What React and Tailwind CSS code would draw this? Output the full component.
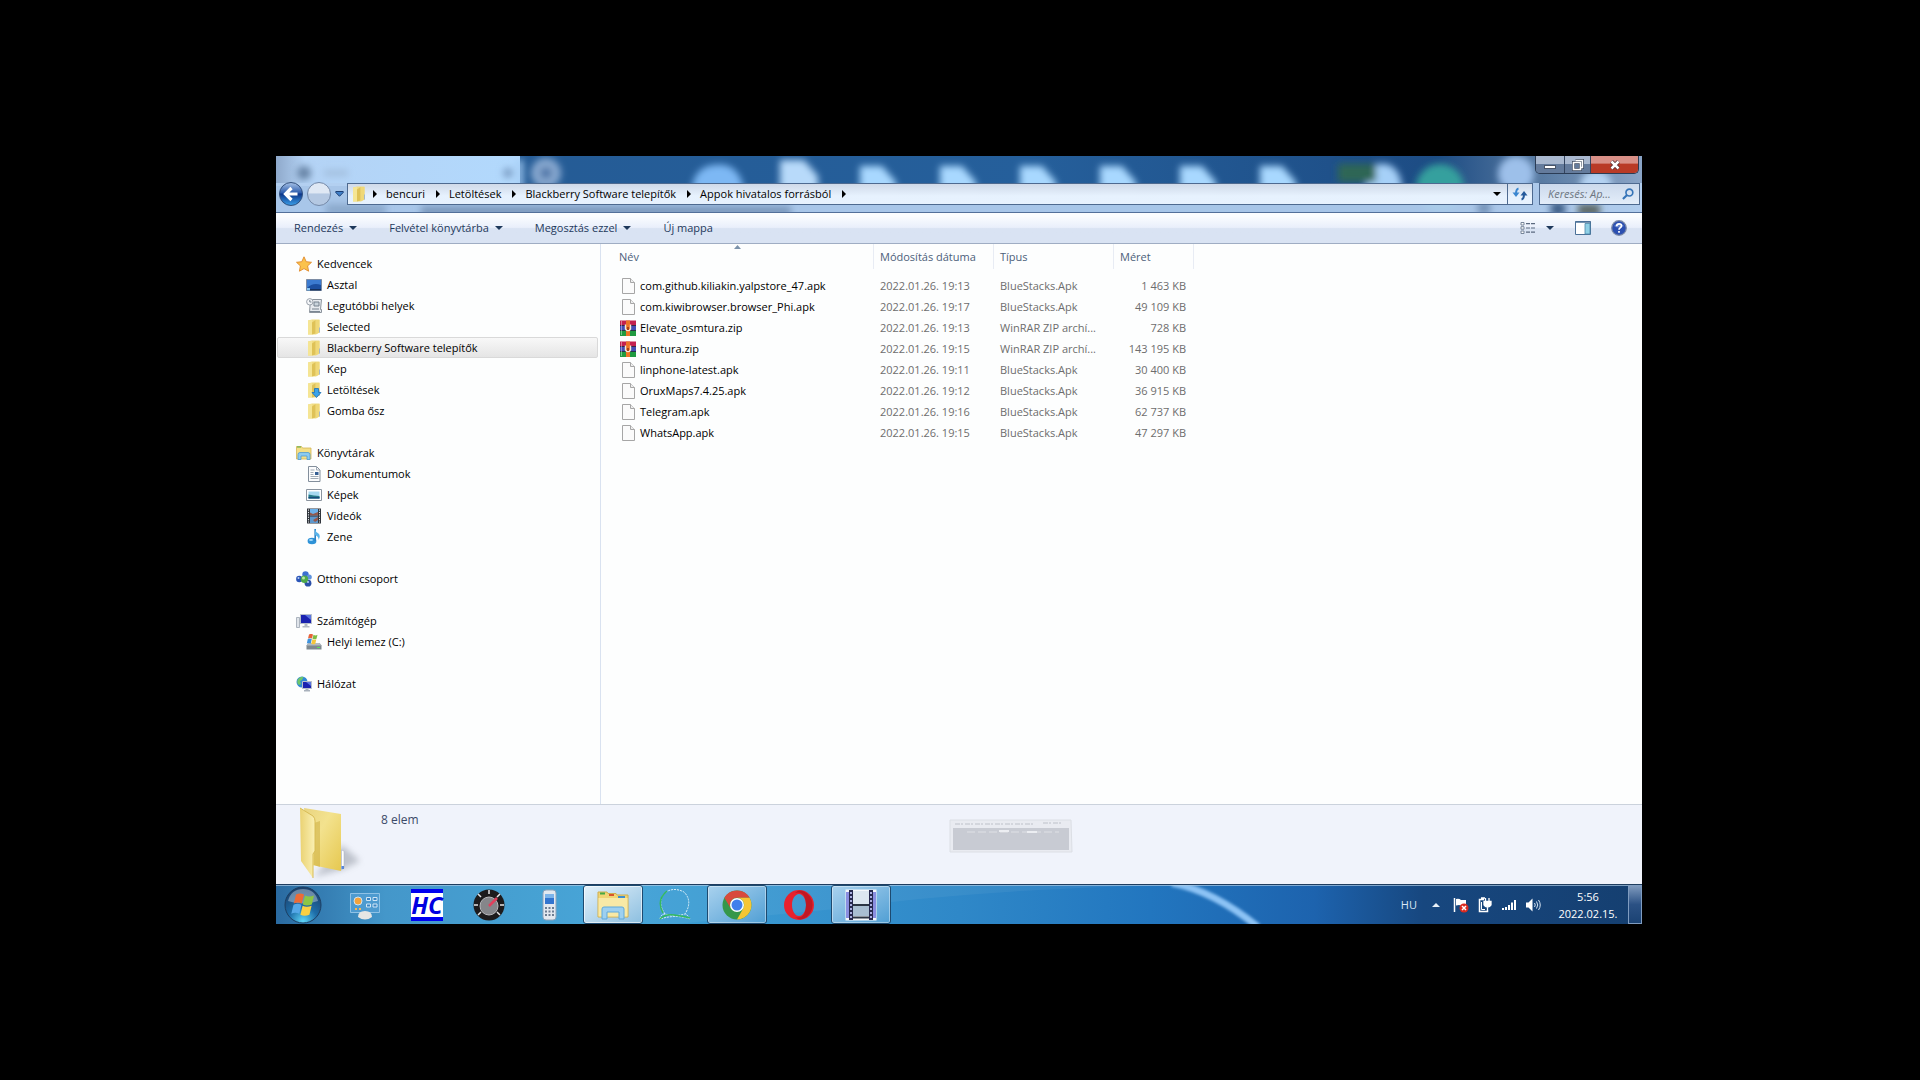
const favorites = [
  { label: 'Asztal', icon: 'desktop' },
  { label: 'Legutóbbi helyek', icon: 'recent' },
  { label: 'Selected', icon: 'folder' },
  { label: 'Blackberry Software telepítők', icon: 'folder', active: true },
  { label: 'Kep', icon: 'folder' },
  { label: 'Letöltések', icon: 'downloads' },
  { label: 'Gomba ősz', icon: 'folder' },
]

const groups = [
  { label: 'Kedvencek', icon: 'star', items: favorites },
  {
    label: 'Könyvtárak',
    icon: 'library',
    items: [
      { label: 'Dokumentumok', icon: 'document' },
      { label: 'Képek', icon: 'picture' },
      { label: 'Videók', icon: 'video' },
      { label: 'Zene', icon: 'music' },
    ],
  },
  { label: 'Otthoni csoport', icon: 'homegroup', items: [] },
  { label: 'Számítógép', icon: 'computer', items: [{ label: 'Helyi lemez (C:)', icon: 'disk' }] },
  { label: 'Hálózat', icon: 'network', items: [] },
]

const files = [
  { name: 'com.github.kiliakin.yalpstore_47.apk', date: '2022.01.26. 19:13', type: 'BlueStacks.Apk', size: '1 463 KB' },
  { name: 'com.kiwibrowser.browser_Phi.apk', date: '2022.01.26. 19:17', type: 'BlueStacks.Apk', size: '49 109 KB' },
  { name: 'Elevate_osmtura.zip', date: '2022.01.26. 19:13', type: 'WinRAR ZIP archí...', size: '728 KB', zip: true },
  { name: 'huntura.zip', date: '2022.01.26. 19:15', type: 'WinRAR ZIP archí...', size: '143 195 KB', zip: true },
  { name: 'linphone-latest.apk', date: '2022.01.26. 19:11', type: 'BlueStacks.Apk', size: '30 400 KB' },
  { name: 'OruxMaps7.4.25.apk', date: '2022.01.26. 19:12', type: 'BlueStacks.Apk', size: '36 915 KB' },
  { name: 'Telegram.apk', date: '2022.01.26. 19:16', type: 'BlueStacks.Apk', size: '62 737 KB' },
  { name: 'WhatsApp.apk', date: '2022.01.26. 19:15', type: 'BlueStacks.Apk', size: '47 297 KB' },
]

const crumbs = ['bencuri', 'Letöltések', 'Blackberry Software telepítők', 'Appok hivatalos forrásból']

const folderShape = (
  <>
    <path d="M2 1.500 6 .5h7.500v13L10 15.500H2z" fill="#f0dc84" />
    <path d="M2 1.500 6 1v14.500H2z" fill="#f5e594" />
    <path d="M6 3.500 9.500 1v13.500L6 15.500z" fill="#dfc257" />
    <path d="M10 1h3.500v12.500L10 15z" fill="#efd878" />
    <path d="M13.500 8.500v5" stroke="#a5b9c9" />
  </>
)

const shapes = {
  folder: folderShape,
  star: (
    <path d="M8 .8 10.200 5.700l5.300.6-3.900 3.600 1 5.300L8 12.600l-4.600 2.600 1-5.300L.5 6.300l5.300-.6z" fill="#fbc24c" stroke="#e08a2b" strokeWidth=".9" />
  ),
  desktop: (
    <>
      <path d="M.5 2.500h15v11H.5z" fill="#1c4fa0" stroke="#7c8ca4" />
      <path d="M1 3h14v5Q7 5 1 11z" fill="#3c7bd0" />
      <path d="M1 12h14v1.500H1z" fill="#15305c" />
      <path d="M1 11h3v2.500H1z" fill="#86c4f2" />
    </>
  ),
  recent: (
    <>
      <path d="M4.500 1.500h11l-1 10h1v3h-12z" fill="#e6eaee" stroke="#8b939c" />
      <path d="M8 4h5v4H8zM6 11h7" fill="#c9d4dc" stroke="#76828e" />
      <circle cx="3.800" cy="3.800" r="3.200" fill="#f5f7fa" stroke="#9aa2ab" />
      <path d="M3.800 2v2h1.700M4 13.500h10" fill="none" stroke="#7b8792" />
    </>
  ),
  downloads: (
    <>
      {folderShape}
      <path d="M8.500 6.500h4v4h2.500l-4.500 5-4.500-5h2.500z" fill="#3aa3ea" stroke="#1a6fb8" strokeWidth=".8" />
    </>
  ),
  library: (
    <>
      <path d="M.5 1.500h5l1 1.500h8.500v11H.5z" fill="#f4df87" stroke="#d3b553" strokeWidth=".8" />
      <path d="M1 2h4" stroke="#54ad4d" />
      <path d="M2 14.500V9.500q0-2 2-2h8q2 0 2 2v5h-3V11H5v3.500z" fill="#8ccbf0" stroke="#4f9bd0" strokeWidth=".8" />
    </>
  ),
  document: (
    <>
      <path d="M2.500.5h8l3.500 3.500v11.500H2.500z" fill="#fbfcfd" stroke="#838f9c" />
      <path d="M10.500.5V4H14M4.500 4h4M4.500 6.500h3M4.500 8.500h3M4.500 10.500h8M4.500 12.500h8" fill="none" stroke="#a0abb6" />
      <path d="M9 6h3.500v3H9z" fill="#345f94" />
    </>
  ),
  picture: (
    <>
      <path d="M.5 2.500h15v11H.5z" fill="#fff" stroke="#8a949f" />
      <path d="M2.500 4.500h11v7h-11z" fill="#a6d9f0" />
      <path d="M2.500 7.500q5 1 11 1.500v2.500h-11z" fill="#277b87" />
      <path d="M2.500 10h11v1.500h-11z" fill="#174c7c" />
    </>
  ),
  video: (
    <>
      <path d="M1 .5h14v15H1z" fill="#30353c" />
      <path d="M4 1h8v6.500H4z" fill="#6cb1ea" />
      <path d="M4 8.500h8V15H4z" fill="#5d97cc" />
      <path d="m4 4.500 3 1.500 5-2v3.500H4zM7 12l5-3v3l-3 2z" fill="#94584c" />
      <path d="M2.500 1.500v13M13.500 1.500v13" stroke="#e8edf0" strokeDasharray="1.200 1.200" />
    </>
  ),
  music: (
    <>
      <ellipse cx="6" cy="12" rx="4.400" ry="3.300" fill="#2e93d8" />
      <path d="M9.200 0v12" stroke="#2b80c4" strokeWidth="1.600" />
      <path d="M9 0q.5 3 3.500 4.500Q15 7 12.500 11q.5-3.500-3.500-5z" fill="#58b3ea" />
      <ellipse cx="5" cy="11" rx="2" ry="1" fill="#a4dafb" />
    </>
  ),
  homegroup: (
    <>
      <circle cx="9.500" cy="3.500" r="3.200" fill="#3c6fd0" />
      <circle cx="3.300" cy="8" r="3.200" fill="#2a55b8" />
      <circle cx="12" cy="12.200" r="3.400" fill="#2a4fa8" />
      <circle cx="13.200" cy="6" r="2.600" fill="#5f93dd" />
      <circle cx="8.500" cy="8.200" r="3.700" fill="#4ea94a" />
      <circle cx="7.500" cy="7" r="1.500" fill="#b9e6a4" />
      <circle cx="2.500" cy="7" r="1" fill="#b8d1f5" />
      <circle cx="12" cy="11" r="1" fill="#b8d1f5" />
    </>
  ),
  computer: (
    <>
      <path d="M.5 4.500h3v10h-3z" fill="#dfe4ea" stroke="#9aa4b0" strokeWidth=".8" />
      <path d="M4.500 1.500h11v9h-11z" fill="#1a22b0" stroke="#b7bfca" />
      <path d="M9 2h6v5z" fill="#5a74e0" />
      <path d="M8.500 11h3v2h2v1.500h-7V13h2z" fill="#b3bac4" />
    </>
  ),
  disk: (
    <>
      <path d="M2.500 9h11l2 2.500v4H.5v-4z" fill="#7f898f" />
      <path d="M2.500 9h11l2 2.500H.5z" fill="#b3bbc1" />
      <path d="M11 13.500h3" stroke="#5ce05a" />
      <path d="M3 .5q2-1.200 4 0L6 4.500q-2-1-4 0z" fill="#e8623a" />
      <path d="M7.500 .8q2 1.200 4 0l-1 4q-2 1-4 0z" fill="#7fbc42" />
      <path d="M1.800 5q2-1 4 0l-1 4.500q-2-1-4 0z" fill="#3f93dd" />
      <path d="M6.300 5.200q2 1 4 0l-1 4.500q-2 1-4 0z" fill="#f6c63c" />
    </>
  ),
  network: (
    <>
      <circle cx="6" cy="6" r="5.500" fill="#3089d6" />
      <path d="M2 3q3-3 5.500-2L6 4 4 5l1 3-2 1Q0 7 2 3z" fill="#6fc66a" />
      <path d="M6.500 5.500h9v7h-9z" fill="#1a22b0" stroke="#b7bfca" />
      <path d="M10 6h5v4z" fill="#5a74e0" />
      <path d="M9.500 13h3v1h1.500v1.500H8V14h1.500z" fill="#a9b1bc" />
    </>
  ),
  file: (
    <>
      <path d="M2.500.5h8l4 4v11h-12z" fill="#fbfbfb" stroke="#a6a6a6" />
      <path d="M10.500.5v4h4" fill="#eee" stroke="#a6a6a6" />
    </>
  ),
  zip: (
    <>
      <path d="M0 .5h16V6H0z" fill="#c4214f" />
      <path d="M0 5.500h16V11H0z" fill="#454cb4" />
      <path d="M0 10.500h16V16H0z" fill="#1f9a40" />
      <path d="M0 5.500h16M0 10.500h16" stroke="#26233a" strokeWidth=".8" />
      <path d="M6 .5h4V16H6z" fill="#ee7426" />
      <path d="M5.500 4.500V9q.5 1.500 2.500 1.500T10.500 9V4.500" fill="none" stroke="#f3ecdc" strokeWidth="1.400" />
      <path d="M7 7h2v3H7z" fill="#a8401c" />
      <path d="M1.500 1v14" stroke="#fff" strokeOpacity=".4" />
    </>
  ),
}

const Icon = ({ name, className = 'size-4' }) => (
  <svg viewBox="0 0 16 16" className={`${className} shrink-0`} aria-hidden="true">
    {shapes[name]}
  </svg>
)

const DownArrow = ({ className = 'text-[#1e395b]' }) => (
  <svg viewBox="0 0 8 4" className={`h-1 w-2 shrink-0 ${className}`} aria-hidden="true">
    <path d="M0 0h8L4 4z" fill="currentColor" />
  </svg>
)

// Desktop and windows seen through the glass frame
const GlassBackdrop = () => (
  <svg viewBox="0 0 1366 56" preserveAspectRatio="none" className="absolute inset-0 h-full w-full" aria-hidden="true">
    <defs>
      <filter id="soft" x="-20%" y="-50%" width="140%" height="200%">
        <feGaussianBlur stdDeviation="3.500" />
      </filter>
      <linearGradient id="sky" x1="0" x2="1" y1="0" y2="0">
        <stop offset="0" stopColor="#255a93" />
        <stop offset=".55" stopColor="#255f9b" />
        <stop offset=".85" stopColor="#1d4c84" />
        <stop offset=".92" stopColor="#54779f" />
        <stop offset="1" stopColor="#8aa4c6" />
      </linearGradient>
      <linearGradient id="tab" x1="0" x2="1" y1="0" y2="0">
        <stop offset="0" stopColor="#8fa9cb" />
        <stop offset=".12" stopColor="#b4d3f5" />
        <stop offset="1" stopColor="#b2d9fd" />
      </linearGradient>
    </defs>
    <path d="M0 0h1366v56H0z" fill="url(#sky)" />
    <path d="M0 0h244v30H0z" fill="url(#tab)" />
    <g filter="url(#soft)">
      <path d="M241 4h6v30h-6z" fill="#a6cdf4" />
      <circle cx="28" cy="17" r="7" fill="#6784a6" />
      <path d="M48 14h24v6H48z" fill="#a2bedd" />
      <circle cx="232" cy="17" r="5" fill="#7b9dc4" />
      <circle cx="270" cy="17" r="15" fill="#88a9d0" />
      <circle cx="270" cy="17" r="6" fill="#4f76a8" />
      <path d="M416 36q0-20 16-26 32-8 36 26z" fill="#7db8f4" />
      <path d="M504 4h24l14 16v16h-38z" fill="#b8dafa" />
      <path d="M584 10h22l14 16v14h-36zM664 10h22l14 16v14h-36zM744 10h22l14 16v14h-36zM824 10h22l14 16v14h-36zM904 10h22l14 16v14h-36zM984 10h22l14 16v14h-36z" fill="#a8d8ff" />
      <path d="M1090 8h20q16 4 16 28h-36z" fill="#a6d0f8" />
      <path d="M1062 8h38v18h-38z" fill="#2d6655" />
      <circle cx="1164" cy="32" r="24" fill="#35a09e" />
      <circle cx="1240" cy="18" r="18" fill="#9dc0ea" />
      <circle cx="1320" cy="30" r="16" fill="#b4d2f2" />
    </g>
    <path d="M0 27h1366v29H0z" fill="#b3cff0" opacity=".92" />
    <g filter="url(#soft)">
      <path d="M145 50h370v10H145z" fill="#7a98bc" />
      <path d="M50 48h60v12H50z" fill="#8ba9cc" />
      <circle cx="1208" cy="52" r="7" fill="#7593b8" />
      <circle cx="1282" cy="53" r="8" fill="#3f6189" />
      <path d="M1302 48h22v12h-22z" fill="#5c6765" />
    </g>
  </svg>
)

const WindowControls = () => (
  <div className="flex h-[18px] overflow-hidden rounded-b-[5px] border border-t-0 border-[#2b3c55] text-white">
    <button aria-label="Kis méret" className="flex w-7 items-end justify-center bg-linear-to-b from-[#a9b8cf] from-45% to-[#647b9c] to-50% pb-1">
      <span className="h-1 w-3 border border-[#4a5568] bg-white" />
    </button>
    <button aria-label="Előző méret" className="flex w-[27px] items-center justify-center border-x border-[#33445f] bg-linear-to-b from-[#a9b8cf] from-45% to-[#647b9c] to-50%">
      <svg viewBox="0 0 12 12" className="size-3" aria-hidden="true">
        <path d="M3.500 1.500h7v7H8M1.500 3.500h7v7h-7z" fill="none" stroke="#3f4b60" strokeWidth="3" />
        <path d="M3.500 1.500h7v7H9" fill="none" stroke="#fff" strokeWidth="1.400" />
        <path d="M1.500 3.500h7v7h-7z" fill="none" stroke="#fff" strokeWidth="1.600" />
      </svg>
    </button>
    <button aria-label="Bezárás" className="flex w-[47px] items-center justify-center bg-linear-to-b from-[#d99087] from-40% to-[#b93a26] to-50%">
      <svg viewBox="0 0 12 10" className="h-[10px] w-3" aria-hidden="true">
        <path d="m2.500 1.500 7 7M9.500 1.500l-7 7" stroke="#4f2a30" strokeWidth="4" />
        <path d="m2.500 1.500 7 7M9.500 1.500l-7 7" stroke="#fff" strokeWidth="2.500" />
      </svg>
    </button>
  </div>
)

const CrumbArrow = () => (
  <svg viewBox="0 0 4 8" className="h-2 w-1 shrink-0" aria-hidden="true">
    <path d="M0 0v8l4-4z" />
  </svg>
)

const AddressRow = () => (
  <div className="flex h-[22px] items-center pr-0.5 pl-[3px]">
    <button aria-label="Vissza" className="mr-1 size-6 shrink-0">
      <svg viewBox="0 0 24 24" aria-hidden="true">
        <defs>
          <linearGradient id="back" x1="0" x2="0" y1="0" y2="1">
            <stop offset="0" stopColor="#a9c4e8" />
            <stop offset=".45" stopColor="#2c5cac" />
            <stop offset=".5" stopColor="#0c3588" />
            <stop offset="1" stopColor="#3aa0ea" />
          </linearGradient>
        </defs>
        <circle cx="12" cy="12" r="11.500" fill="url(#back)" stroke="#33507c" />
        <path d="M12.500 6 6.500 12l6 6M7 12h11.500" fill="none" stroke="#fff" strokeWidth="3.200" />
      </svg>
    </button>
    <button aria-label="Előre" className="size-6 shrink-0 rounded-full border border-[#7489a8] bg-linear-to-b from-[#dfe8f4] from-45% to-[#b4c8e2] to-50%" />
    <button aria-label="Előzmények" className="flex w-4 shrink-0 justify-center">
      <svg viewBox="0 0 9 6" className="h-1.5 w-[9px]" aria-hidden="true">
        <path d="M.8.500h7.400v1L4.500 5.300.8 1.500z" fill="#3f7fc8" stroke="#1c3f74" />
      </svg>
    </button>
    <div className="flex h-full min-w-0 flex-1 items-center border border-[#4e6a90] bg-linear-to-b from-[#d3dbe8]/90 to-[#eaf4ff]/95 to-60% pl-[3px]">
      <Icon name="folder" />
      <nav className="ml-1.5 flex items-center whitespace-nowrap" aria-label="Útvonal">
        <CrumbArrow />
        {crumbs.map((crumb) => (
          <span key={crumb} className="flex items-center">
            <a href="#" className="pr-[11px] pl-[9px]">{crumb}</a>
            <CrumbArrow />
          </span>
        ))}
      </nav>
      <button aria-label="Előző helyek" className="ml-auto flex w-5 justify-center">
        <DownArrow className="text-black" />
      </button>
      <button aria-label="Frissítés" className="flex h-full w-[25px] items-center justify-center border-l border-[#4e6a90]">
        <svg viewBox="0 0 16 16" className="size-4" aria-hidden="true">
          <path d="M6.500 2.500Q4 3 4 8" fill="none" stroke="#3a86d0" strokeWidth="2" />
          <path d="M.5 6.500h7L4 11z" fill="#3a86d0" />
          <path d="M9.500 13.500Q12 13 12 8" fill="none" stroke="#245a9c" strokeWidth="2" />
          <path d="M8.500 9.500h7L12 5z" fill="#245a9c" />
        </svg>
      </button>
    </div>
    <label className="ml-1.5 flex h-full w-[101px] items-center border border-[#4e6a90] bg-linear-to-b from-[#cfdbec]/90 to-[#e6effa]/95 pr-[5px] pl-2">
      <input type="text" aria-label="Keresés" placeholder="Keresés: Ap..." className="min-w-0 flex-1 italic outline-none placeholder:text-[#6d7580]" />
      <svg viewBox="0 0 13 13" className="size-3 shrink-0" aria-hidden="true">
        <circle cx="8" cy="5" r="3.700" fill="none" stroke="#3574b8" strokeWidth="1.800" />
        <path d="M5.500 7.500 1 12" stroke="#3574b8" strokeWidth="2.300" />
      </svg>
    </label>
  </div>
)

const Toolbar = () => (
  <div className="flex h-[31px] items-center border-b border-[#9fadc3] bg-linear-to-b from-[#fbfdff] from-10% via-[#e9effb] via-48% to-[#d9e3f3] to-52% pr-[15px] pl-[18px] text-[#1e395b]">
    <div className="flex items-center gap-8">
      {['Rendezés', 'Felvétel könyvtárba', 'Megosztás ezzel'].map((label) => (
        <button key={label} className="flex items-center gap-1.5">
          {label}
          <DownArrow />
        </button>
      ))}
      <button>Új mappa</button>
    </div>
    <div className="ml-auto flex items-center">
      <button aria-label="Nézet váltása" className="flex items-center gap-[10px]">
        <svg viewBox="0 0 16 14" className="h-3.5 w-4" aria-hidden="true">
          <path d="M1 1.500h3v2.500H1zM1 5.700h3v2.500H1zM1 10h3v2.500H1z" fill="#fff" stroke="#6b7a90" strokeWidth=".9" />
          <path d="M6 2.700h4M11 2.700h4M6 7h4M11 7h4M6 11.200h4M11 11.200h4" stroke="#5b6a80" strokeWidth="1.200" />
        </svg>
        <DownArrow />
      </button>
      <button aria-label="Betekintő ablaktábla" className="ml-[21px]">
        <svg viewBox="0 0 16 14" className="h-3.5 w-4" aria-hidden="true">
          <path d="M.5.5h15v13H.5z" fill="#fff" stroke="#4a7097" />
          <path d="M.5 1h15" stroke="#4a7097" strokeWidth="1.500" />
          <path d="M10 2.500h5v10.500h-5z" fill="#8fd0e6" stroke="#4a86a8" strokeWidth=".8" />
        </svg>
      </button>
      <button aria-label="Súgó" className="ml-5">
        <svg viewBox="0 0 16 16" className="size-4" aria-hidden="true">
          <circle cx="8" cy="8" r="7.300" fill="#2b4fb0" stroke="#7d8ba8" strokeWidth="1.200" />
          <path d="M3 6Q8 0 13 6 8 9 3 6" fill="#8aa6e0" opacity=".6" />
          <path d="M5.600 6.200q.2-2.400 2.500-2.400t2.400 2q0 1.200-1.300 2-1.200.7-1.200 1.900M8 11v1.800" fill="none" stroke="#fff" strokeWidth="1.700" />
        </svg>
      </button>
    </div>
  </div>
)

const Sidebar = () => (
  <nav className="flex w-[325px] shrink-0 flex-col gap-[21px] border-r border-[#d9e2f0] pt-[9px]" aria-label="Navigáció">
    {groups.map((group) => (
      <div key={group.label}>
        <a href="#" className="flex h-[21px] items-center gap-[5px] pl-5">
          <Icon name={group.icon} />
          {group.label}
        </a>
        {group.items.map((item) => (
          <a
            key={item.label}
            href="#"
            className={`mr-0.5 ml-px flex h-[21px] items-center gap-[5px] rounded-xs border pl-7 ${
              item.active ? 'border-[#d9d9d9] bg-linear-to-b from-[#f8f8f8] to-[#e5e5e5]' : 'border-transparent'
            }`}
          >
            <Icon name={item.icon} />
            {item.label}
          </a>
        ))}
      </div>
    ))}
  </nav>
)

const HeadCell = ({ label, sorted, className }) => (
  <th scope="col" className={`relative border-r border-[#e8ecf4] text-left font-normal text-[#4c607a] ${className}`}>
    {label}
    {sorted && (
      <svg viewBox="0 0 7 4" className="absolute inset-x-0 top-px mx-auto h-1 w-[7px]" aria-hidden="true">
        <path d="M0 4h7L3.500 0z" fill="#7c93ab" />
      </svg>
    )}
  </th>
)

const FileList = () => (
  <div className="min-w-0 flex-1">
    <table className="w-[593px] table-fixed border-separate border-spacing-0 whitespace-nowrap text-[#6d6d6d]">
      <thead>
        <tr className="h-[25px]">
          <HeadCell label="Név" sorted className="w-[273px] pl-[18px]" />
          <HeadCell label="Módosítás dátuma" className="w-[120px] pl-1.5" />
          <HeadCell label="Típus" className="w-[120px] pl-1.5" />
          <HeadCell label="Méret" className="w-[80px] pl-1.5" />
        </tr>
        <tr className="h-[6px]" />
      </thead>
      <tbody>
        {files.map((file) => (
          <tr key={file.name} className="h-[21px]">
            <td className="pl-[19px] text-black">
              <span className="flex items-center gap-1">
                <Icon name={file.zip ? 'zip' : 'file'} />
                {file.name}
              </span>
            </td>
            <td className="pl-1.5">{file.date}</td>
            <td className="pl-1.5">{file.type}</td>
            <td className="pr-2 text-right">{file.size}</td>
          </tr>
        ))}
      </tbody>
    </table>
  </div>
)

const DetailsPane = () => (
  <footer className="relative flex h-20 items-start border-t border-[#cbd2dc] bg-[#f0f3fb] pl-5">
    <svg viewBox="0 0 76 78" className="h-[78px] w-[76px]" aria-hidden="true">
      <defs>
        <linearGradient id="flap" x1="0" x2="1" y1="0" y2="1">
          <stop offset="0" stopColor="#e9d480" />
          <stop offset=".4" stopColor="#f3e28e" />
          <stop offset="1" stopColor="#e6c850" />
        </linearGradient>
        <linearGradient id="cover" x1="0" x2="1" y1="0" y2="0">
          <stop offset="0" stopColor="#ead272" />
          <stop offset="1" stopColor="#faf0b4" />
        </linearGradient>
        <filter id="shade">
          <feGaussianBlur stdDeviation="3" />
        </filter>
      </defs>
      <path d="m18 72 30-8 16-8-18-16z" fill="#a8adb8" opacity=".7" filter="url(#shade)" />
      <path d="m8 3 37 6v57l-29-6z" fill="url(#flap)" />
      <path d="m18 18 6-2v46l-6-2z" fill="#c9a93a" opacity=".5" />
      <path d="m45.500 45 2.500 1v17l-2.500 2z" fill="#fff" stroke="#a5afc0" strokeWidth=".5" />
      <path d="M45.500 61h2.500v3h-2.500z" fill="#5a88d8" />
      <path d="m4 3 13 8q2 2 2 5v30l-2 3v24L5 56z" fill="url(#cover)" />
      <path d="m4 3 13 8q2 2 2 5v30l-2 3v24" fill="none" stroke="#d8bc55" />
    </svg>
    <span className="mt-[7px] ml-[9px] text-xs text-[#3b4a68]">8 elem</span>
    <svg viewBox="0 0 124 34" className="absolute top-[14px] left-1/2 -ml-[10px] h-[34px] w-[124px]" aria-hidden="true">
      <path d="M1 1h121l1 32H1z" fill="#e9ebf1" stroke="#dcdfe5" />
      <path d="M4 9h116v22H4z" fill="#c8cbd3" />
      <path d="M6 5h78M94 4h18" stroke="#d3d6dd" strokeWidth="2" strokeDasharray="5 1 2 2" />
      <path d="M18 13h92" stroke="#dfe1e6" strokeDasharray="8 3" />
      <path d="M50 12h10M78 13h10" stroke="#eceef2" strokeWidth="2" />
    </svg>
  </footer>
)

const TaskButton = ({ label, open, active, children }) => (
  <button
    aria-label={label}
    className={`flex h-full w-[60px] items-center justify-center rounded-[3px] border ${
      active
        ? 'border-[#1d4a70] bg-linear-to-br from-[#e4f1fa] to-[#8cbfe0] inset-ring inset-ring-white/60'
        : open
          ? 'border-[#1d4a70] bg-linear-to-br from-[#a9d2ee] to-[#4f9fd4] inset-ring inset-ring-white/40'
          : 'border-transparent'
    }`}
  >
    {children}
  </button>
)

const StartOrb = () => (
  <button aria-label="Start" className="flex w-[54px] shrink-0 items-center justify-center">
    <svg viewBox="0 0 38 38" className="size-[38px]" aria-hidden="true">
      <defs>
        <radialGradient id="orb" cx=".5" cy=".95" r=".9">
          <stop offset="0" stopColor="#5ed6f8" />
          <stop offset=".45" stopColor="#1d6da8" />
          <stop offset="1" stopColor="#1b426e" />
        </radialGradient>
      </defs>
      <circle cx="19" cy="19" r="18" fill="url(#orb)" stroke="#1d3e62" />
      <path d="M4 15Q7 3 19 3t15 12q-15 5-30 0" fill="#fff" opacity=".35" />
      <path d="M12 8.500q4-2 8 0l-2.200 9q-4-2-8 0z" fill="#ee6a35" />
      <path d="M21 9.500q4 2 9 0l-2.200 9q-5 2-9 0z" fill="#8cc644" />
      <path d="M9.500 18.800q4-2 8 0l-2.200 9q-4-2-8 0z" fill="#55a8e8" />
      <path d="M18.600 19.800q4 2 9 0l-2.200 9q-5 2-9 0z" fill="#fbd043" />
    </svg>
  </button>
)

const Tray = () => (
  <div className="ml-auto flex items-center text-white">
    <button className="mr-[15px] text-[#d8e6f5]">HU</button>
    <button aria-label="Rejtett ikonok">
      <svg viewBox="0 0 8 4" className="h-1 w-2" aria-hidden="true">
        <path d="M0 4h8L4 0z" fill="#e8f0f8" />
      </svg>
    </button>
    <div className="ml-[13px] flex items-center gap-2">
      <svg viewBox="0 0 16 16" className="size-4" aria-hidden="true">
        <path d="M1.500 1v14" stroke="#fff" strokeWidth="1.500" />
        <path d="M3 2q3-1 5 1h5v6q-5 0-7-1-1 0-3 .5z" fill="#fff" />
        <circle cx="11" cy="11" r="4.500" fill="#dc2b20" />
        <path d="m9 9 4 4M13 9l-4 4" stroke="#fff" strokeWidth="1.500" />
      </svg>
      <svg viewBox="0 0 16 16" className="size-4" aria-hidden="true">
        <path d="M7 2.500H2.500v12h8V13M4 1h4" fill="none" stroke="#fff" strokeWidth="1.500" />
        <path d="M4.500 5v7.500H8" fill="none" stroke="#fff" />
        <path d="M8.500 1v3M12 1v3M7 4.500h7V8q-1 2-3.500 2T7 8zM10.500 10v3" fill="#fff" stroke="#fff" strokeWidth="1.300" />
      </svg>
      <svg viewBox="0 0 16 16" className="size-4" aria-hidden="true">
        <path d="M1 11h2v2H1zM4 10h2v3H4zM7 8h2v5H7zM10 5.500h2V13h-2zM13 3h2v10h-2z" fill="#fff" />
      </svg>
      <svg viewBox="0 0 16 16" className="size-4" aria-hidden="true">
        <path d="M1 5.500h2.500L7.500 1.500v13l-4-4H1z" fill="#fff" />
        <path d="M9.500 6q1.500 2 0 4M11.500 4.500q2.500 3.500 0 7M13.500 3q3.500 5 0 10" fill="none" stroke="#d6e4f2" />
      </svg>
    </div>
    <button className="ml-3 flex w-[70px] flex-col items-center leading-[17px]">
      <span>5:56</span>
      <span>2022.02.15.</span>
    </button>
    <button aria-label="Asztal megjelenítése" className="ml-[5px] h-[39px] w-[14px] border border-[#7f9cc0] bg-linear-to-b from-[#7f9abd] via-[#2b5184] to-[#1a4273]" />
  </div>
)

const Taskbar = () => (
  <div className="relative h-10 border-t border-[#1f3d5f]">
    <svg viewBox="0 0 1366 39" preserveAspectRatio="none" className="absolute inset-0 h-full w-full" aria-hidden="true">
      <defs>
        <filter id="glow">
          <feGaussianBlur stdDeviation="1.500" />
        </filter>
        <linearGradient id="bar" x1="0" x2="1" y1="0" y2="0">
          <stop offset="0" stopColor="#1f639c" />
          <stop offset=".08" stopColor="#3a92c8" />
          <stop offset=".25" stopColor="#3fa2d6" />
          <stop offset=".5" stopColor="#2f88c8" />
          <stop offset=".64" stopColor="#2276bf" />
          <stop offset=".76" stopColor="#1d63ae" />
          <stop offset=".84" stopColor="#17477f" />
          <stop offset="1" stopColor="#153f70" />
        </linearGradient>
      </defs>
      <path d="M0 0h1366v39H0z" fill="url(#bar)" />
      <path d="M560 24Q700 4 900 0H0v39h400z" fill="#fff" opacity=".05" />
      <path d="M896-2q42 8 86 44" fill="none" stroke="#8cc3f5" strokeWidth="7" filter="url(#glow)" />
      <path d="M0 .5h1366" stroke="#a9c7e2" strokeOpacity=".7" />
    </svg>
    <div className="relative flex h-full">
      <StartOrb />
      <div className="ml-[5px] flex items-center gap-0.5">
        <TaskButton label="Vezérlőpult">
          <svg viewBox="0 0 32 32" className="size-8" aria-hidden="true">
            <path d="M1.500 4.500h29v19h-29z" fill="#4e9bd0" stroke="#8fc2e6" />
            <circle cx="9" cy="12" r="4" fill="#f4a33c" stroke="#cfe4f4" />
            <path d="M17.500 8.500h4v3h-4zM24 8.500h4v3h-4zM17.500 15h4v3h-4zM24 15h4v3h-4z" fill="#3c86c4" stroke="#d0e6f6" />
            <path d="M6 20h2M10 20h2" stroke="#f6b95a" strokeWidth="2" />
            <path d="M9 28q0-6 7-6t7 6q-7 5-14 0" fill="#e6e6e4" />
          </svg>
        </TaskButton>
        <TaskButton label="HC">
          <span className="flex size-8 items-center justify-center border-y-4 border-[#0000f0] bg-white text-2xl leading-none font-bold text-[#0000e0] italic">HC</span>
        </TaskButton>
        <TaskButton label="Hangerő">
          <svg viewBox="0 0 32 32" className="size-8" aria-hidden="true">
            <circle cx="16" cy="16" r="15.500" fill="#1d1b1c" />
            <path d="M16 1v4M1 16h4M27 16h4M5 5l3 3M27 5l-3 3M5 26l3-3M27 26l-3-3" stroke="#e6e6e6" strokeWidth="1.500" />
            <circle cx="16" cy="17" r="9" fill="#85868a" stroke="#b9b9bc" />
            <path d="m16 17 8-8" stroke="#e0405c" strokeWidth="2.500" />
          </svg>
        </TaskButton>
        <TaskButton label="Telefon">
          <svg viewBox="0 0 32 32" className="size-8" aria-hidden="true">
            <rect x="8" y="1" width="13" height="30" rx="3" fill="#e3e9f0" stroke="#8da3ba" />
            <path d="M10 5h9v10h-9z" fill="#3375cf" />
            <path d="M10 5h9v4h-9z" fill="#7db4ea" />
            <path d="M10 19h2M13.500 19h2M17 19h2M10 22.500h2M13.500 22.500h2M17 22.500h2M10 26h2M13.500 26h2M17 26h2" stroke="#6c7d92" strokeWidth="2" />
          </svg>
        </TaskButton>
        <TaskButton label="Intéző" active>
          <svg viewBox="0 0 32 32" className="size-8" aria-hidden="true">
            <path d="M1 3h9l1 1.500h8l1 1.500h11v22H1z" fill="#f0d574" stroke="#cfae4e" />
            <path d="M1.500 9h29v18.500h-29z" fill="#f8e9a6" />
            <path d="M3 4.500h5" stroke="#45a845" strokeWidth="2" />
            <path d="M12 6h5" stroke="#d9542c" strokeWidth="2" />
            <path d="M21 8h7" stroke="#3d8fd0" strokeWidth="2" />
            <path d="M5 30V20q0-2 2-2h18q2 0 2 2v10h-5v-7H10v7z" fill="#9dd0f0" stroke="#5fa9dc" />
          </svg>
        </TaskButton>
        <TaskButton label="Program">
          <svg viewBox="0 0 36 34" className="h-[34px] w-9" aria-hidden="true">
            <path d="M8 26Q-1 13 9 4q8-5 18 0 9 9 1 22 3 1 5 5-14-5-30 0 1-5 5-5 10 3 20 0" fill="none" stroke="#e4f4fb" strokeDasharray="2 1" />
            <path d="M6 25Q-1 12 10 3M3 31q5-5 14-4t16 3" fill="none" stroke="#35b95e" strokeWidth="1.500" />
          </svg>
        </TaskButton>
        <TaskButton label="Chrome" open>
          <svg viewBox="0 0 32 32" className="size-8" aria-hidden="true">
            <circle cx="16" cy="16" r="14.500" fill="#35974a" />
            <path d="M3.400 8.800A14.500 14.500 0 0 1 28.600 8.800H16a7.200 7.200 0 0 0-6.200 10.800z" fill="#d84a3c" />
            <path d="M28.600 8.800A14.500 14.500 0 0 1 16 30.500l6.200-10.900A7.200 7.200 0 0 0 16 8.800z" fill="#f6c634" />
            <circle cx="16" cy="16" r="7" fill="#fff" />
            <circle cx="16" cy="16" r="5.500" fill="#3f80ec" />
          </svg>
        </TaskButton>
        <TaskButton label="Opera">
          <svg viewBox="0 0 32 32" className="size-8" aria-hidden="true">
            <path fillRule="evenodd" d="M16 1a15 15 0 1 1 0 30 15 15 0 0 1 0-30m0 4c-4 0-7 5-7 11s3 11 7 11 7-5 7-11-3-11-7-11" fill="#e8222e" />
            <path d="M20 2a15 15 0 0 1 0 28q-4 1.500-8-2 6 2 9-3 2-4 2-9t-2-9q-3-5-9-3 4-3.500 8-2" fill="#a5131c" opacity=".6" />
          </svg>
        </TaskButton>
        <TaskButton label="Videó" open>
          <svg viewBox="0 0 32 32" className="size-8" aria-hidden="true">
            <path d="M.5.500h31v31H.5z" fill="#f4f7fb" />
            <path d="M1 3h3v26H1zM28 3h3v26h-3z" fill="#8a8ee0" />
            <path d="M4 1h4v30H4zM24 1h4v30h-4z" fill="#26284e" />
            <path d="M6 3v26M26 3v26" stroke="#b9bdf0" strokeWidth="1.800" strokeDasharray="2 2" />
            <path d="M8 2h16v13H8z" fill="#dce6f0" />
            <path d="M8 17h16v10H8z" fill="#a9bed2" />
            <path d="M8 16h16M8 28.500h16" stroke="#2c3544" strokeWidth="2" />
          </svg>
        </TaskButton>
      </div>
      <Tray />
    </div>
  </div>
)

export default function App() {
  return (
    <div className="flex min-h-screen bg-black py-[156px] pr-[278px] pl-[276px] font-['Open_Sans','Noto_Sans',sans-serif] text-[11px] leading-4 text-black">
      <div className="flex min-w-0 flex-1 flex-col bg-[#fdfefe]">
        <header className="relative h-[57px] overflow-hidden border-b border-[#53709a]">
          <GlassBackdrop />
          <div className="relative">
            <div className="flex h-[27px] justify-end pr-[3px]">
              <WindowControls />
            </div>
            <AddressRow />
          </div>
        </header>
        <Toolbar />
        <div className="flex flex-1">
          <Sidebar />
          <FileList />
        </div>
        <DetailsPane />
        <Taskbar />
      </div>
    </div>
  )
}
